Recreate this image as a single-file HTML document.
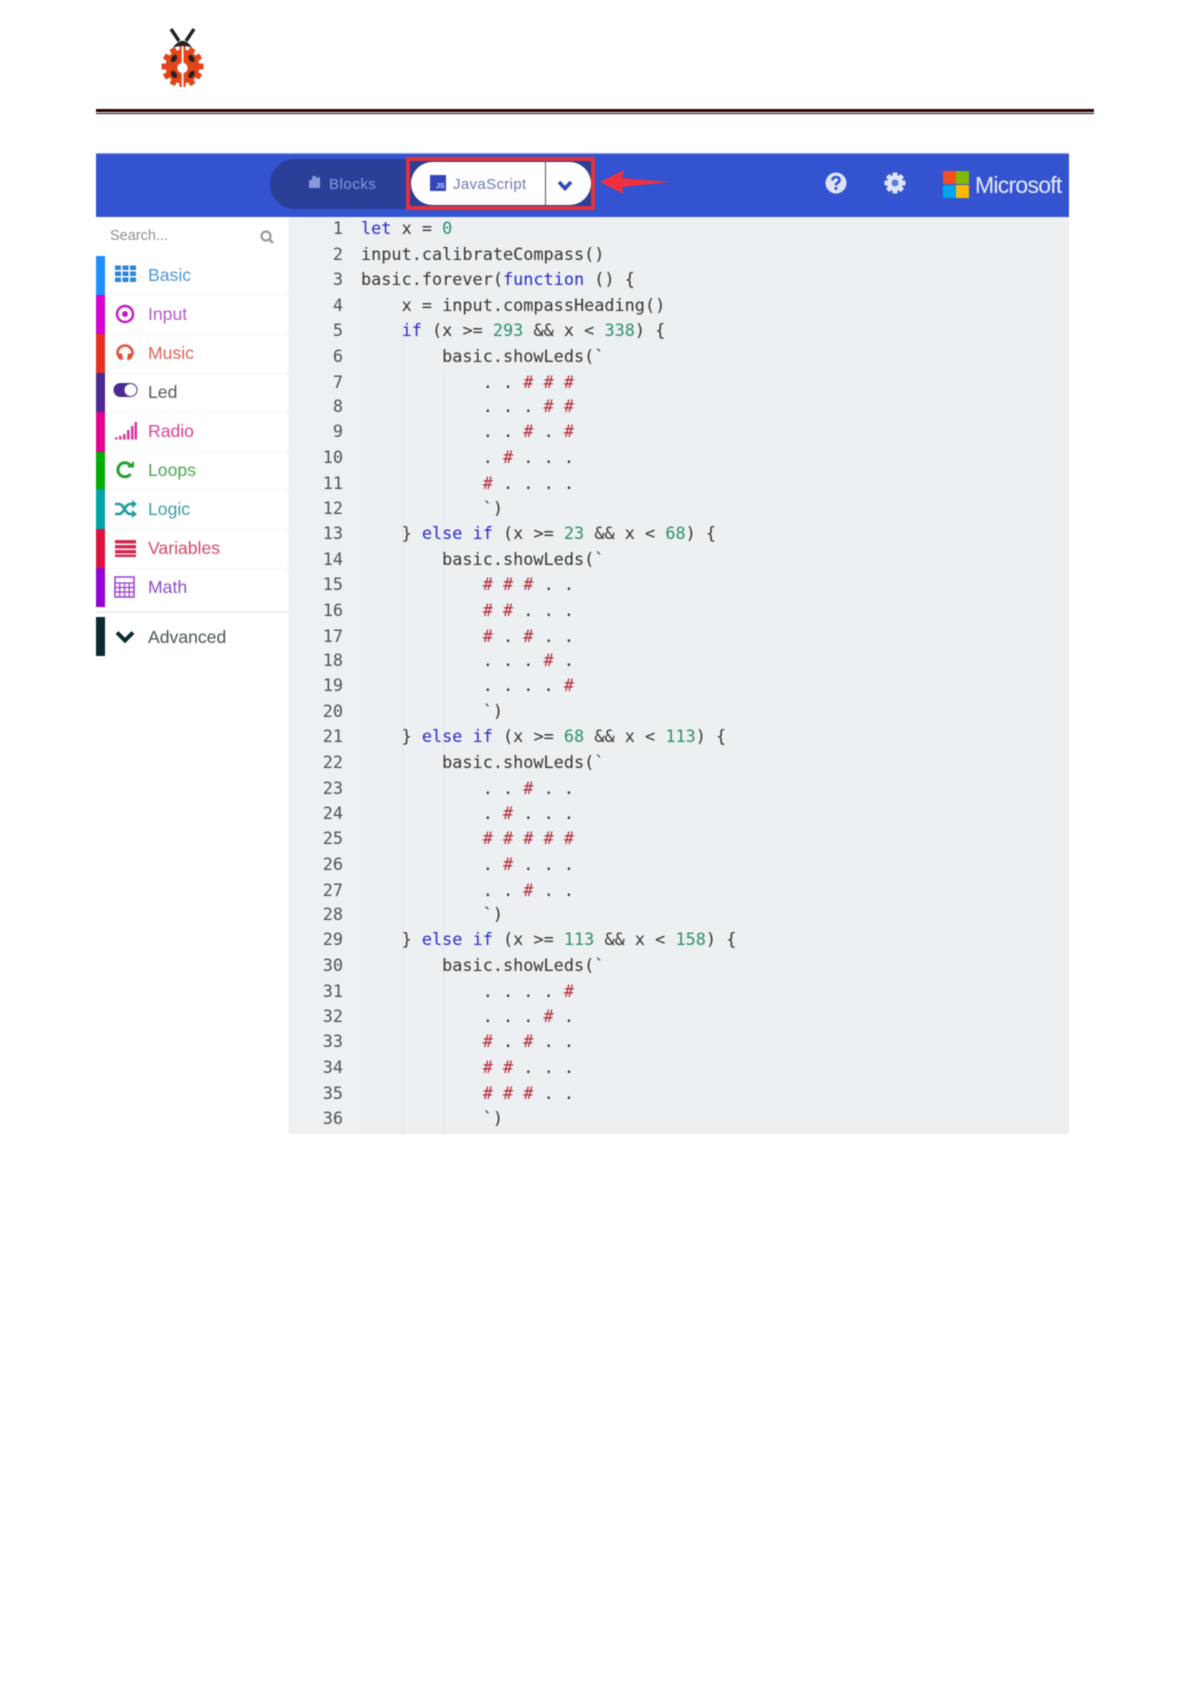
<!DOCTYPE html>
<html><head><meta charset="utf-8"><style>
html,body{margin:0;padding:0;background:#fff;width:1191px;height:1684px;overflow:hidden}
#w{position:relative;width:1191px;height:1684px;filter:blur(.45px)}
#w div,#w svg,#w span.a{position:absolute}
.l{left:361px;height:26px;line-height:26px;font:16.85px/26px "DejaVu Sans Mono","Liberation Mono",monospace;color:#333;white-space:pre}
.n{left:299px;width:44px;height:26px;text-align:right;font:16.85px/26px "DejaVu Sans Mono","Liberation Mono",monospace;color:#4d5356}
.k{color:#2a2ac8}.d{color:#2f8f6e}.h{color:#b52a36}
.t{left:148px;font:17.6px/24px "Liberation Sans",sans-serif;height:24px;white-space:pre}
.b{left:96px;width:9px}
.s{left:105px;width:183px;height:1px;background:#f4f5f6}
</style></head><body><div id="w">

<svg style="left:158px;top:27px" width="50" height="60" viewBox="0 0 50 60">
<path d="M13 2 L21 14 M36 2 L28 14" stroke="#222" stroke-width="3.400" fill="none"/>
<g fill="#e2451a"><circle cx="24.500" cy="39.500" r="17"/><rect x="21.500" y="18.500" width="6" height="42" rx="1"/><g id="g"><rect x="21.500" y="18.500" width="6" height="42" rx="1" transform="rotate(30 24.500 39.500)"/><rect x="21.500" y="18.500" width="6" height="42" rx="1" transform="rotate(60 24.500 39.500)"/><rect x="21.500" y="18.500" width="6" height="42" rx="1" transform="rotate(90 24.500 39.500)"/><rect x="21.500" y="18.500" width="6" height="42" rx="1" transform="rotate(120 24.500 39.500)"/><rect x="21.500" y="18.500" width="6" height="42" rx="1" transform="rotate(150 24.500 39.500)"/></g></g>
<rect x="23.700" y="18" width="1.800" height="43" fill="#fff"/>
<path d="M15 20.500 Q24.500 7 34 20.500 Q24.500 17.500 15 20.500Z" fill="#222"/>
<circle cx="24.500" cy="41" r="5.200" fill="#fff"/>
<g fill="#222"><ellipse cx="16" cy="31.500" rx="2.600" ry="4" transform="rotate(35 16 31.500)"/><ellipse cx="33.500" cy="31.500" rx="2.600" ry="4" transform="rotate(-35 33.500 31.500)"/><ellipse cx="16" cy="47.500" rx="2.600" ry="4" transform="rotate(-35 16 47.500)"/><ellipse cx="33.500" cy="47.500" rx="2.600" ry="4" transform="rotate(35 33.500 47.500)"/></g>
</svg>

<div style="left:96px;top:109px;width:998px;height:2.500px;background:#2a0000"></div>
<div style="left:96px;top:113px;width:998px;height:1px;background:#2a0000"></div>

<div style="left:96px;top:153px;width:973px;height:64px;background:#3353d0"></div>
<div style="left:96px;top:153px;width:973px;height:1px;background:#8fa2e4"></div>
<div style="left:270px;top:159px;width:150px;height:50px;background:#2a3f98;border-radius:25px 0 0 25px"></div>
<svg style="left:308px;top:175px" width="14" height="16" viewBox="0 0 14 16"><path d="M1 5 H4 V3 Q4 1 6 1 H8 V3 L12 2 V13 H1Z" fill="#8a9ad8"/></svg>
<div style="left:329px;top:173px;font:15px/24px 'Liberation Sans',sans-serif;color:#8a9ad8;letter-spacing:.55px">Blocks</div>

<div style="left:406px;top:157px;width:189px;height:53px;background:#2a3f98"></div>
<div style="left:411px;top:162px;width:180px;height:43px;background:#fff;border-radius:22px"></div>
<div style="left:406px;top:157px;width:181px;height:45px;border:4px solid #e2323c"></div>
<div style="left:545px;top:162px;width:1px;height:43px;background:#555"></div>
<div style="left:430px;top:175px;width:16px;height:16px;background:#3347b8"></div>
<div style="left:436px;top:182px;font:bold 7px/9px 'Liberation Sans',sans-serif;color:#cfd6f2">JS</div>
<div style="left:453px;top:173px;font:15px/24px 'Liberation Sans',sans-serif;color:#6d78b8;letter-spacing:.35px">JavaScript</div>
<svg style="left:556px;top:179px" width="18" height="14" viewBox="0 0 18 14"><path d="M3 3 L9 9.500 L15 3" fill="none" stroke="#3347b8" stroke-width="3.600"/></svg>
<svg style="left:598px;top:168px" width="76" height="28" viewBox="0 0 76 28"><path d="M2 14 L26 2 L24 10 L72 14 L24 19 L26 26Z" fill="#f0303c"/></svg>

<svg style="left:825px;top:172px" width="22" height="22" viewBox="0 0 22 22"><circle cx="11" cy="11" r="10.500" fill="#dfe4f7"/><path d="M7.500 8.500 Q7.500 5 11 5 Q14.500 5 14.500 8 Q14.500 10 12.500 11 Q11 11.800 11 13.500" fill="none" stroke="#3353d0" stroke-width="2.600"/><rect x="9.600" y="15" width="2.800" height="2.800" fill="#3353d0"/></svg>
<svg style="left:884px;top:172px" width="22" height="22" viewBox="0 0 22 22"><g fill="#dfe4f7"><circle cx="11" cy="11" r="8"/><rect x="8.500" y="0.500" width="5" height="21" rx="1"/><rect x="8.500" y="0.500" width="5" height="21" rx="1" transform="rotate(45 11 11)"/><rect x="8.500" y="0.500" width="5" height="21" rx="1" transform="rotate(90 11 11)"/><rect x="8.500" y="0.500" width="5" height="21" rx="1" transform="rotate(135 11 11)"/></g><circle cx="11" cy="11" r="3.500" fill="#5f78da"/></svg>

<div style="left:943px;top:171px;width:12.500px;height:13px;background:#f25022"></div>
<div style="left:956px;top:171px;width:12.500px;height:13px;background:#7fba00"></div>
<div style="left:943px;top:184.500px;width:12.500px;height:13px;background:#00a4ef"></div>
<div style="left:956px;top:184.500px;width:12.500px;height:13px;background:#ffb900"></div>
<div style="left:975px;top:171px;font:23px/28px 'Liberation Sans',sans-serif;color:#e8ecfa;letter-spacing:-.75px">Microsoft</div>

<div style="left:288px;top:217px;width:781px;height:917px;background:#ecf0f2"></div>
<div style="left:288px;top:217px;width:72px;height:917px;background:#eef1f3"></div>
<div style="left:402px;top:330px;width:1px;height:804px;background:#e2e6e8"></div>
<div style="left:443px;top:370px;width:1px;height:764px;background:#e2e6e8"></div>

<div style="left:110px;top:225px;font:14.500px/22px 'Liberation Sans',sans-serif;color:#8e9090">Search...</div>
<svg style="left:259px;top:229px" width="16" height="16" viewBox="0 0 16 16"><circle cx="7" cy="7" r="4.500" fill="none" stroke="#9a9c9c" stroke-width="2.200"/><path d="M10.500 10.500 L14 14" stroke="#9a9c9c" stroke-width="2.600"/></svg>

<div class="b" style="top:256px;height:39px;background:#1e90ff"></div>
<div class="b" style="top:295px;height:39px;background:#d400d4"></div>
<div class="b" style="top:334px;height:39px;background:#e63022"></div>
<div class="b" style="top:373px;height:39px;background:#4c2a91"></div>
<div class="b" style="top:412px;height:40px;background:#e3008c"></div>
<div class="b" style="top:452px;height:37px;background:#00aa00"></div>
<div class="b" style="top:489px;height:40px;background:#00a4a6"></div>
<div class="b" style="top:529px;height:39px;background:#dc143c"></div>
<div class="b" style="top:568px;height:39px;background:#9400d3"></div>
<div class="b" style="top:617px;height:39px;background:#0b2a30"></div>
<div class="s" style="top:294px"></div><div class="s" style="top:334px"></div><div class="s" style="top:373px"></div><div class="s" style="top:412px"></div><div class="s" style="top:451px"></div><div class="s" style="top:489px"></div><div class="s" style="top:529px"></div><div class="s" style="top:568px"></div>
<div style="left:96px;top:611px;width:192px;height:2px;background:#eeeeee"></div>

<div class="t" style="top:263px;color:#4f97d8">Basic</div>
<div class="t" style="top:302px;color:#b45cc4">Input</div>
<div class="t" style="top:341px;color:#e0625a">Music</div>
<div class="t" style="top:380px;color:#555862">Led</div>
<div class="t" style="top:419px;color:#d93f96">Radio</div>
<div class="t" style="top:458px;color:#46a84e">Loops</div>
<div class="t" style="top:497px;color:#3d9ea2">Logic</div>
<div class="t" style="top:536px;color:#d04a68">Variables</div>
<div class="t" style="top:575px;color:#8b4cc4">Math</div>
<div class="t" style="top:625px;color:#4a5458">Advanced</div>

<svg style="left:114px;top:264px" width="24" height="20" viewBox="0 0 24 20"><g fill="#2a86d8"><rect x="1" y="1.500" width="6" height="4.500"/><rect x="8.500" y="1.500" width="6" height="4.500"/><rect x="16" y="1.500" width="6" height="4.500"/><rect x="1" y="7.500" width="6" height="4.500"/><rect x="8.500" y="7.500" width="6" height="4.500"/><rect x="16" y="7.500" width="6" height="4.500"/><rect x="1" y="13.500" width="6" height="4.500"/><rect x="8.500" y="13.500" width="6" height="4.500"/><rect x="16" y="13.500" width="6" height="4.500"/></g></svg>
<svg style="left:115px;top:304px" width="20" height="20" viewBox="0 0 20 20"><circle cx="10" cy="10" r="8" fill="none" stroke="#c21cc8" stroke-width="2.400"/><circle cx="10" cy="10" r="3" fill="#c21cc8"/></svg>
<svg style="left:115px;top:343px" width="20" height="20" viewBox="0 0 20 20"><path d="M2.500 12 V10 A7.500 7.500 0 0 1 17.500 10 V12" fill="none" stroke="#e0503e" stroke-width="2.600"/><path d="M2 10.500 H7 L8 16.500 Q5 18 2.500 14Z M18 10.500 H13 L12 16.500 Q15 18 17.500 14Z" fill="#e0503e"/></svg>
<svg style="left:113px;top:382px" width="26" height="16" viewBox="0 0 26 16"><rect x="0.500" y="1" width="24" height="14" rx="7" fill="#4c2a91"/><circle cx="17.500" cy="8" r="6" fill="#fff"/></svg>
<svg style="left:114px;top:421px" width="24" height="20" viewBox="0 0 24 20"><g fill="#d6369a"><rect x="1" y="16.500" width="2.500" height="2"/><rect x="5" y="15" width="2.500" height="3.500"/><rect x="9" y="13" width="2.500" height="5.500"/><rect x="13" y="9" width="2.500" height="9.500"/><rect x="17" y="5" width="2.500" height="13.500"/><rect x="20.500" y="1" width="2.500" height="17.500"/></g></svg>
<svg style="left:115px;top:460px" width="20" height="20" viewBox="0 0 20 20"><path d="M15.500 14 A7 7 0 1 1 15 5" fill="none" stroke="#20a030" stroke-width="3"/><path d="M12 7.500 H19 V1Z" fill="#20a030"/></svg>
<svg style="left:114px;top:499px" width="23" height="20" viewBox="0 0 23 20"><path d="M1 5 H5 C10 5 11 15 16 15 H19 M1 15 H5 C10 15 11 5 16 5 H19" fill="none" stroke="#1e9ca0" stroke-width="2.600"/><path d="M18 1 L23 5 L18 9Z M18 11 L23 15 L18 19Z" fill="#1e9ca0"/></svg>
<svg style="left:114px;top:538px" width="23" height="20" viewBox="0 0 23 20"><g fill="#d42a52"><rect x="1" y="2" width="21" height="3.500"/><rect x="1" y="7" width="21" height="3.500"/><rect x="1" y="12" width="21" height="3.500"/><rect x="1" y="16.500" width="21" height="2.500"/></g></svg>
<svg style="left:114px;top:576px" width="22" height="22" viewBox="0 0 22 22"><rect x="1" y="1" width="19" height="20" fill="none" stroke="#9a3cc8" stroke-width="1.500"/><path d="M1 7 H20 M1 11.500 H20 M1 16 H20 M5.700 7 V21 M10.500 7 V21 M15.200 7 V21" stroke="#9a3cc8" stroke-width="1.200"/></svg>
<svg style="left:114px;top:629px" width="22" height="16" viewBox="0 0 22 16"><path d="M3 3.500 L11 11.500 L19 3.500" fill="none" stroke="#0b2a30" stroke-width="4"/></svg>

<div class="n" style="top:215px">1</div><div class="l" style="top:215px"><span class="k">let</span> x = <span class="d">0</span></div>
<div class="n" style="top:241px">2</div><div class="l" style="top:241px">input.calibrateCompass()</div>
<div class="n" style="top:266px">3</div><div class="l" style="top:266px">basic.forever(<span class="k">function</span> () {</div>
<div class="n" style="top:292px">4</div><div class="l" style="top:292px">    x = input.compassHeading()</div>
<div class="n" style="top:317px">5</div><div class="l" style="top:317px">    <span class="k">if</span> (x &gt;= <span class="d">293</span> &amp;&amp; x &lt; <span class="d">338</span>) {</div>
<div class="n" style="top:343px">6</div><div class="l" style="top:343px">        basic.showLeds(`</div>
<div class="n" style="top:369px">7</div><div class="l" style="top:369px">            . . <span class="h"># # #</span></div>
<div class="n" style="top:393px">8</div><div class="l" style="top:393px">            . . . <span class="h"># #</span></div>
<div class="n" style="top:418px">9</div><div class="l" style="top:418px">            . . <span class="h">#</span> . <span class="h">#</span></div>
<div class="n" style="top:444px">10</div><div class="l" style="top:444px">            . <span class="h">#</span> . . .</div>
<div class="n" style="top:470px">11</div><div class="l" style="top:470px">            <span class="h">#</span> . . . .</div>
<div class="n" style="top:495px">12</div><div class="l" style="top:495px">            `)</div>
<div class="n" style="top:520px">13</div><div class="l" style="top:520px">    } <span class="k">else</span> <span class="k">if</span> (x &gt;= <span class="d">23</span> &amp;&amp; x &lt; <span class="d">68</span>) {</div>
<div class="n" style="top:546px">14</div><div class="l" style="top:546px">        basic.showLeds(`</div>
<div class="n" style="top:571px">15</div><div class="l" style="top:571px">            <span class="h"># # #</span> . .</div>
<div class="n" style="top:597px">16</div><div class="l" style="top:597px">            <span class="h"># #</span> . . .</div>
<div class="n" style="top:623px">17</div><div class="l" style="top:623px">            <span class="h">#</span> . <span class="h">#</span> . .</div>
<div class="n" style="top:647px">18</div><div class="l" style="top:647px">            . . . <span class="h">#</span> .</div>
<div class="n" style="top:672px">19</div><div class="l" style="top:672px">            . . . . <span class="h">#</span></div>
<div class="n" style="top:698px">20</div><div class="l" style="top:698px">            `)</div>
<div class="n" style="top:723px">21</div><div class="l" style="top:723px">    } <span class="k">else</span> <span class="k">if</span> (x &gt;= <span class="d">68</span> &amp;&amp; x &lt; <span class="d">113</span>) {</div>
<div class="n" style="top:749px">22</div><div class="l" style="top:749px">        basic.showLeds(`</div>
<div class="n" style="top:775px">23</div><div class="l" style="top:775px">            . . <span class="h">#</span> . .</div>
<div class="n" style="top:800px">24</div><div class="l" style="top:800px">            . <span class="h">#</span> . . .</div>
<div class="n" style="top:825px">25</div><div class="l" style="top:825px">            <span class="h"># # # # #</span></div>
<div class="n" style="top:851px">26</div><div class="l" style="top:851px">            . <span class="h">#</span> . . .</div>
<div class="n" style="top:877px">27</div><div class="l" style="top:877px">            . . <span class="h">#</span> . .</div>
<div class="n" style="top:901px">28</div><div class="l" style="top:901px">            `)</div>
<div class="n" style="top:926px">29</div><div class="l" style="top:926px">    } <span class="k">else</span> <span class="k">if</span> (x &gt;= <span class="d">113</span> &amp;&amp; x &lt; <span class="d">158</span>) {</div>
<div class="n" style="top:952px">30</div><div class="l" style="top:952px">        basic.showLeds(`</div>
<div class="n" style="top:978px">31</div><div class="l" style="top:978px">            . . . . <span class="h">#</span></div>
<div class="n" style="top:1003px">32</div><div class="l" style="top:1003px">            . . . <span class="h">#</span> .</div>
<div class="n" style="top:1028px">33</div><div class="l" style="top:1028px">            <span class="h">#</span> . <span class="h">#</span> . .</div>
<div class="n" style="top:1054px">34</div><div class="l" style="top:1054px">            <span class="h"># #</span> . . .</div>
<div class="n" style="top:1080px">35</div><div class="l" style="top:1080px">            <span class="h"># # #</span> . .</div>
<div class="n" style="top:1105px">36</div><div class="l" style="top:1105px">            `)</div>
</div></body></html>
